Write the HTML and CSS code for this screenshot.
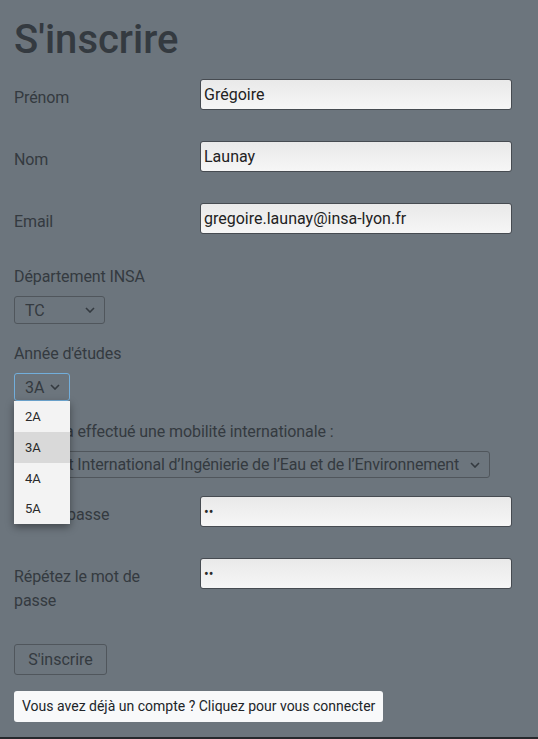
FILE: index.html
```html
<!DOCTYPE html>
<html lang="fr">
<head>
<meta charset="utf-8">
<title>S'inscrire</title>
<link rel="stylesheet" href="styles.css">
</head>
<body>
<main class="page">
  <h1 class="title">S'inscrire</h1>
  <form class="form">
    <div class="row">
      <label class="row-label" for="prenom">Prénom</label>
      <input class="field" id="prenom" type="text" value="Grégoire">
    </div>
    <div class="row">
      <label class="row-label" for="nom">Nom</label>
      <input class="field" id="nom" type="text" value="Launay">
    </div>
    <div class="row">
      <label class="row-label" for="email">Email</label>
      <input class="field" id="email" type="email" value="gregoire.launay@insa-lyon.fr">
    </div>

    <div class="stack">
      <label class="stack-label" for="dept">Département INSA</label>
      <div class="select-box select-tc">
        <select class="select" id="dept"><option>TC</option></select>
        <svg class="chev" width="10" height="6" viewBox="0 0 10 6"><polyline points="1,1 5,5 9,1" fill="none" stroke="#343a40" stroke-width="1.6"/></svg>
      </div>
    </div>

    <div class="stack stack-year">
      <label class="stack-label" for="annee">Année d'études</label>
      <div class="select-box select-year">
        <select class="select" id="annee"><option>2A</option><option selected>3A</option><option>4A</option><option>5A</option></select>
        <svg class="chev" width="10" height="6" viewBox="0 0 10 6"><polyline points="1,1 5,5 9,1" fill="none" stroke="#343a40" stroke-width="1.6"/></svg>
        <ul class="dropdown">
          <li class="opt">2A</li>
          <li class="opt opt-active">3A</li>
          <li class="opt">4A</li>
          <li class="opt">5A</li>
        </ul>
      </div>
    </div>

    <div class="stack stack-mob">
      <label class="stack-label" for="mob">L'élève a effectué une mobilité internationale :</label>
      <div class="select-box select-mob">
        <select class="select select-long" id="mob"><option>Institut International d’Ingénierie de l’Eau et de l’Environnement</option></select>
        <svg class="chev" width="10" height="6" viewBox="0 0 10 6"><polyline points="1,1 5,5 9,1" fill="none" stroke="#343a40" stroke-width="1.6"/></svg>
      </div>
    </div>

    <div class="row">
      <label class="row-label" for="mdp">Mot de passe</label>
      <input class="field field-pass" id="mdp" type="password" value="ab">
    </div>
    <div class="row">
      <label class="row-label" for="mdp2">Répétez le mot de passe</label>
      <input class="field field-pass" id="mdp2" type="password" value="ab">
    </div>

    <button class="submit" type="button">S'inscrire</button>
  </form>
  <a class="login-link" href="#">Vous avez déjà un compte ? Cliquez pour vous connecter</a>
</main>
<footer class="footer"></footer>
</body>
</html>
```

FILE: styles.css
```css
* { box-sizing: border-box; }

html, body {
  margin: 0;
  padding: 0;
}

body {
  display: flex;
  flex-direction: column;
  min-height: 100vh;
  background: #6c757d;
  color: #343a40;
  font-family: Roboto, "Liberation Sans", sans-serif;
  font-size: 16px;
  line-height: 24px;
}

.page {
  padding: 16px 14px 15px 14px;
}

.title {
  margin: 0 0 15px 0;
  font-size: 40px;
  line-height: 48px;
  font-weight: 500;
  color: #343a40;
}

.form {
  display: flex;
  flex-direction: column;
  align-items: flex-start;
}

.row {
  display: grid;
  grid-template-columns: 186px 312px;
  align-items: start;
  margin-bottom: 24px;
}

.row-label {
  padding: 7px 20px 7px 0;
  line-height: 24px;
  letter-spacing: -0.1px;
}

.field {
  height: 31px;
  width: 312px;
  margin: 0;
  padding: 0 3px;
  border: 1px solid #464b51;
  border-radius: 3px;
  background: linear-gradient(#e9e9e9, #f6f6f6);
  font-family: Roboto, "Liberation Sans", sans-serif;
  font-size: 16px;
  color: #222;
  outline: none;
}

.field-pass {
  font-size: 14px;
  letter-spacing: 0;
  color: #2a2a2a;
}

.stack {
  display: flex;
  flex-direction: column;
  align-items: flex-start;
  margin-bottom: 18px;
}

.stack-year {
  margin-bottom: 19px;
}

.stack-mob {
  margin-bottom: 18px;
}

.stack-label {
  line-height: 24px;
  margin-bottom: 7px;
  letter-spacing: -0.1px;
}

.select-box {
  position: relative;
  display: flex;
  align-items: center;
  height: 28px;
  padding: 0 9px 0 10px;
  border: 1px solid #50565c;
  border-radius: 3px;
}

.select-tc { width: 91px; }
.select-year { width: 56px; border-color: #72aedb; }
.select-mob { width: 476px; height: 27px; }

.select {
  flex: 1;
  min-width: 0;
  appearance: none;
  -webkit-appearance: none;
  border: 0;
  margin: 0;
  padding: 0;
  background: transparent;
  font-family: Roboto, "Liberation Sans", sans-serif;
  font-size: 16px;
  color: #343a40;
  outline: none;
}

.select-long {
  letter-spacing: -0.17px;
}

.chev {
  flex: none;
  display: block;
}

.dropdown {
  position: absolute;
  left: -1px;
  top: calc(100% + 1px);
  width: 56px;
  margin: 0;
  padding: 0;
  list-style: none;
  background: #f3f3f3;
  box-shadow: 0 3px 8px rgba(0, 0, 0, 0.4);
  z-index: 5;
}

.opt {
  height: 30.75px;
  line-height: 32px;
  padding-left: 11px;
  font-size: 13px;
  color: #2a2a2a;
}

.opt-active {
  background: #d9d9d9;
}

.submit {
  height: 31px;
  width: 93px;
  margin: 0 0 16px 0;
  padding: 0;
  border: 1px solid #50565c;
  border-radius: 3px;
  background: transparent;
  font-family: Roboto, "Liberation Sans", sans-serif;
  font-size: 16px;
  color: #343a40;
}

.login-link {
  display: inline-block;
  height: 31px;
  line-height: 31px;
  padding: 0 8px;
  border-radius: 3px;
  background: #f8f9fa;
  color: #212529;
  font-size: 14px;
  text-decoration: none;
}

.footer {
  flex: 1;
  min-height: 2px;
  background: #26292d;
}
```
